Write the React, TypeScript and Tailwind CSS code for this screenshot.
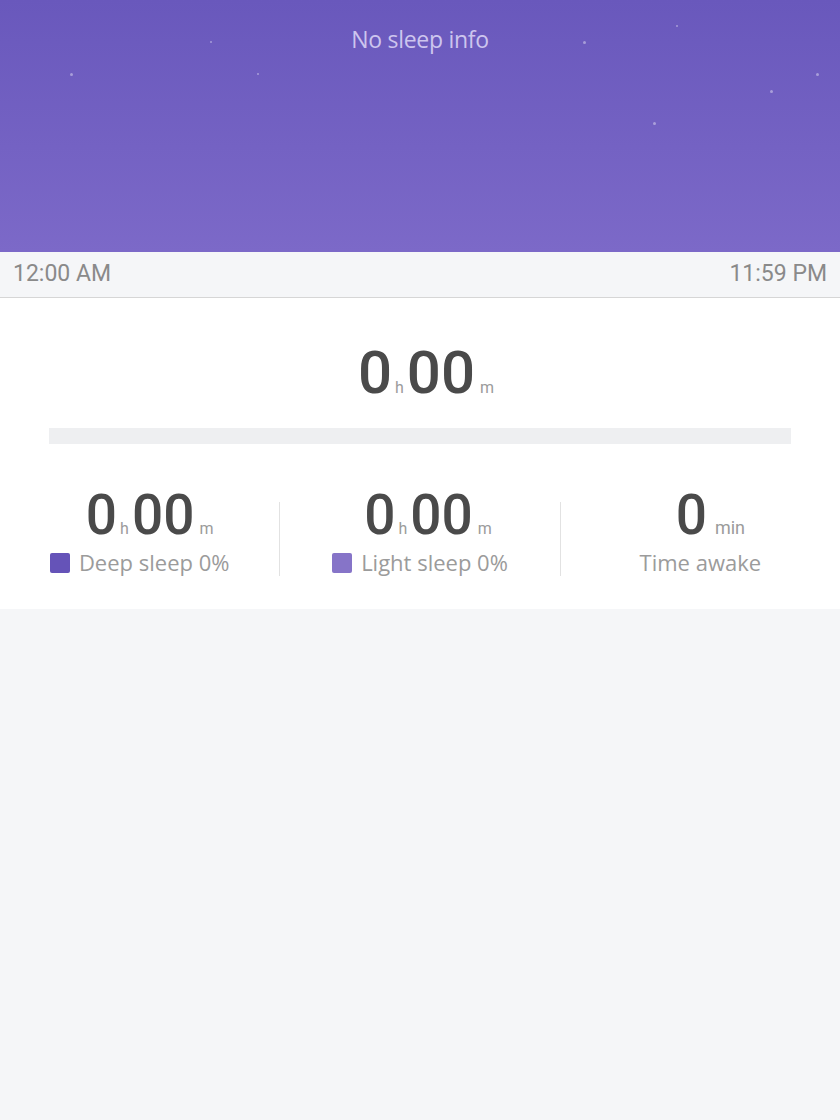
import React from 'react';

const stars = [
  { x: 70, y: 73, s: 3 },
  { x: 210, y: 41, s: 2 },
  { x: 257, y: 73, s: 2 },
  { x: 583, y: 41, s: 3 },
  { x: 676, y: 25, s: 2 },
  { x: 653, y: 122, s: 3 },
  { x: 770, y: 90, s: 3 },
  { x: 816, y: 73, s: 3 },
];

const digit = { fontFamily: 'Roboto, "DejaVu Sans", sans-serif' };
const label = { fontFamily: '"Open Sans", "Noto Sans", sans-serif' };

function Duration({ big }: { big?: boolean }) {
  const num = big ? 'text-[60px] leading-none font-medium' : 'text-[55px] leading-none font-medium';
  return (
    <div className="flex items-baseline text-[#4a4a4a]" style={digit}>
      <span className={num}>0</span>
      <span className="text-[16px] text-[#9b9b9b] mx-[3px]">h</span>
      <span className={num}>00</span>
      <span className="text-[16px] text-[#9b9b9b] ml-[5px]">m</span>
    </div>
  );
}

export default function App() {
  return (
    <div className="min-h-[1120px] bg-[#f5f6f8]">
      {/* Header */}
      <div className="relative h-[252px] bg-gradient-to-b from-[#6958bc] to-[#7c69c8] overflow-hidden">
        {stars.map((st, i) => (
          <div key={i} className="absolute rounded-full bg-white/40"
            style={{ left: st.x, top: st.y, width: st.s, height: st.s }} />
        ))}
        <div className="pt-[22px] text-center text-[23px] text-[#cdc5ee] tracking-[-0.3px]" style={label}>No sleep info</div>
      </div>

      {/* Time range */}
      <div className="h-[46px] flex items-center justify-between px-[13px] border-b border-[#d6d6d6] text-[23px] text-[#8a8a8a]" style={digit}>
        <span>12:00 AM</span>
        <span>11:59 PM</span>
      </div>

      {/* Summary card */}
      <div className="bg-white pt-[45px] pb-[30px]">
        <div className="flex justify-center pl-[12px]">
          <Duration big />
        </div>
        <div className="mx-[49px] mt-[25px] h-[16px] bg-[#eeeff1]" />

        <div className="flex items-center mt-[44px]">
          <div className="flex-1 flex flex-col items-center">
            <div className="pl-[20px]"><Duration /></div>
            <div className="flex items-center gap-[9px] mt-[3px] text-[22px] text-[#9b9b9b]" style={label}>
              <span className="w-[20px] h-[20px] rounded-[2px] bg-[#6553b8]" />
              Deep sleep 0%
            </div>
          </div>
          <div className="w-px h-[74px] mt-[10px] bg-[#e2e2e2]" />
          <div className="flex-1 flex flex-col items-center">
            <div className="pl-[16px]"><Duration /></div>
            <div className="flex items-center gap-[9px] mt-[3px] text-[22px] text-[#9b9b9b]" style={label}>
              <span className="w-[20px] h-[20px] rounded-[2px] bg-[#8674c8]" />
              Light sleep 0%
            </div>
          </div>
          <div className="w-px h-[74px] mt-[10px] bg-[#e2e2e2]" />
          <div className="flex-1 flex flex-col items-center">
            <div className="flex items-baseline text-[#4a4a4a] pl-[20px]" style={digit}>
              <span className="text-[55px] leading-none font-medium">0</span>
              <span className="text-[18px] text-[#9b9b9b] ml-[8px]">min</span>
            </div>
            <div className="mt-[3px] text-[22px] text-[#9b9b9b]" style={label}>Time awake</div>
          </div>
        </div>
      </div>
    </div>
  );
}
